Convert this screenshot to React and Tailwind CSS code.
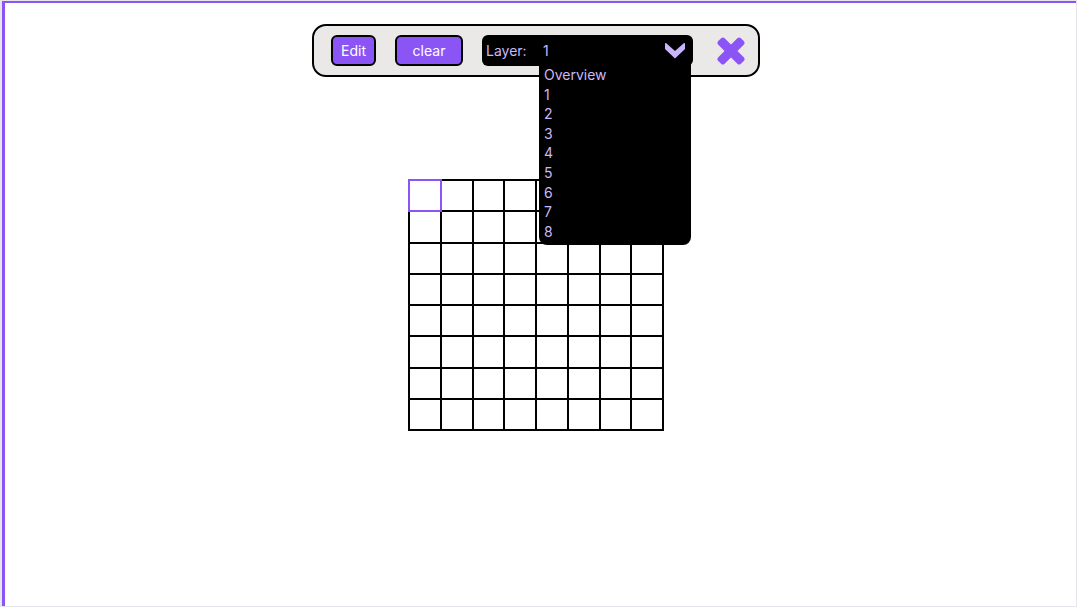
const LAYERS = ['Overview', '1', '2', '3', '4', '5', '6', '7', '8'];

function Chevron() {
  return (
    <svg width="20" height="17" viewBox="0 0 20 17">
      <path
        d="M1 1 L10 9 L19 1 Q20 0.5 20 2 L20 7 L10 16.5 L0 7 L0 2 Q0 0.5 1 1 Z"
        fill="#c9b5fb"
      />
    </svg>
  );
}

function CloseIcon() {
  return (
    <svg width="28" height="28" viewBox="0 0 28 28">
      <g fill="#8b55f6">
        <rect x="-2" y="9.5" width="32" height="9" rx="2.5" transform="rotate(45 14 14)" />
        <rect x="-2" y="9.5" width="32" height="9" rx="2.5" transform="rotate(-45 14 14)" />
      </g>
    </svg>
  );
}

export default function App() {
  const cells = Array.from({ length: 64 }, (_, i) => i);
  return (
    <div
      className="w-[1077px] h-[607px] border border-l-2 border-[#e6e4ec] bg-white overflow-hidden"
      style={{ fontFamily: 'Inter, "Liberation Sans", Arial, sans-serif' }}
    >
      <div className="h-full border-l-[3px] border-t-[2px] border-[#8b55f6] pt-[21px]">
        <div className="flex justify-center pr-[9px]">
          <div className="flex items-center h-[53px] w-[448px] rounded-[14px] border-2 border-black bg-[#ebe9e8] pl-[17px] pr-[13px]">
            <button className="h-[31px] w-[45px] rounded-[6px] border-2 border-black bg-[#8b55f6] text-white text-[14px]">
              Edit
            </button>
            <button className="ml-[19px] h-[31px] w-[68px] rounded-[6px] border-2 border-black bg-[#8b55f6] text-white text-[14px]">
              clear
            </button>
            <div className="relative ml-[19px] flex items-center h-[31px] w-[211px] rounded-[6px] bg-black text-[14px] text-[#cbb8f9]">
              <span className="pl-[4px] w-[57px]">Layer:</span>
              <span className="pl-[4px] flex-1">1</span>
              <span className="pr-[8px] flex items-center">
                <Chevron />
              </span>
              <div className="absolute left-[57px] top-[27px] w-[152px] rounded-b-[8px] bg-black pt-[3px] pb-[4px] pl-[5px] z-10">
                {LAYERS.map((l) => (
                  <div key={l} className="h-[19.6px] leading-[19.6px] text-[14px]">
                    {l}
                  </div>
                ))}
              </div>
            </div>
            <div className="ml-[24px] flex items-center">
              <CloseIcon />
            </div>
          </div>
        </div>
        <div className="flex justify-center mt-[102px] pr-[9px]">
          <div className="grid grid-cols-[repeat(8,29.75px)] auto-rows-[29.3px] gap-[2px] bg-black p-[2px]">
            {cells.map((i) => (
              <div
                key={i}
                className={
                  i === 0
                    ? 'bg-white outline-2 outline-solid outline-[#8b55f6] relative'
                    : 'bg-white'
                }
              />
            ))}
          </div>
        </div>
      </div>
    </div>
  );
}
